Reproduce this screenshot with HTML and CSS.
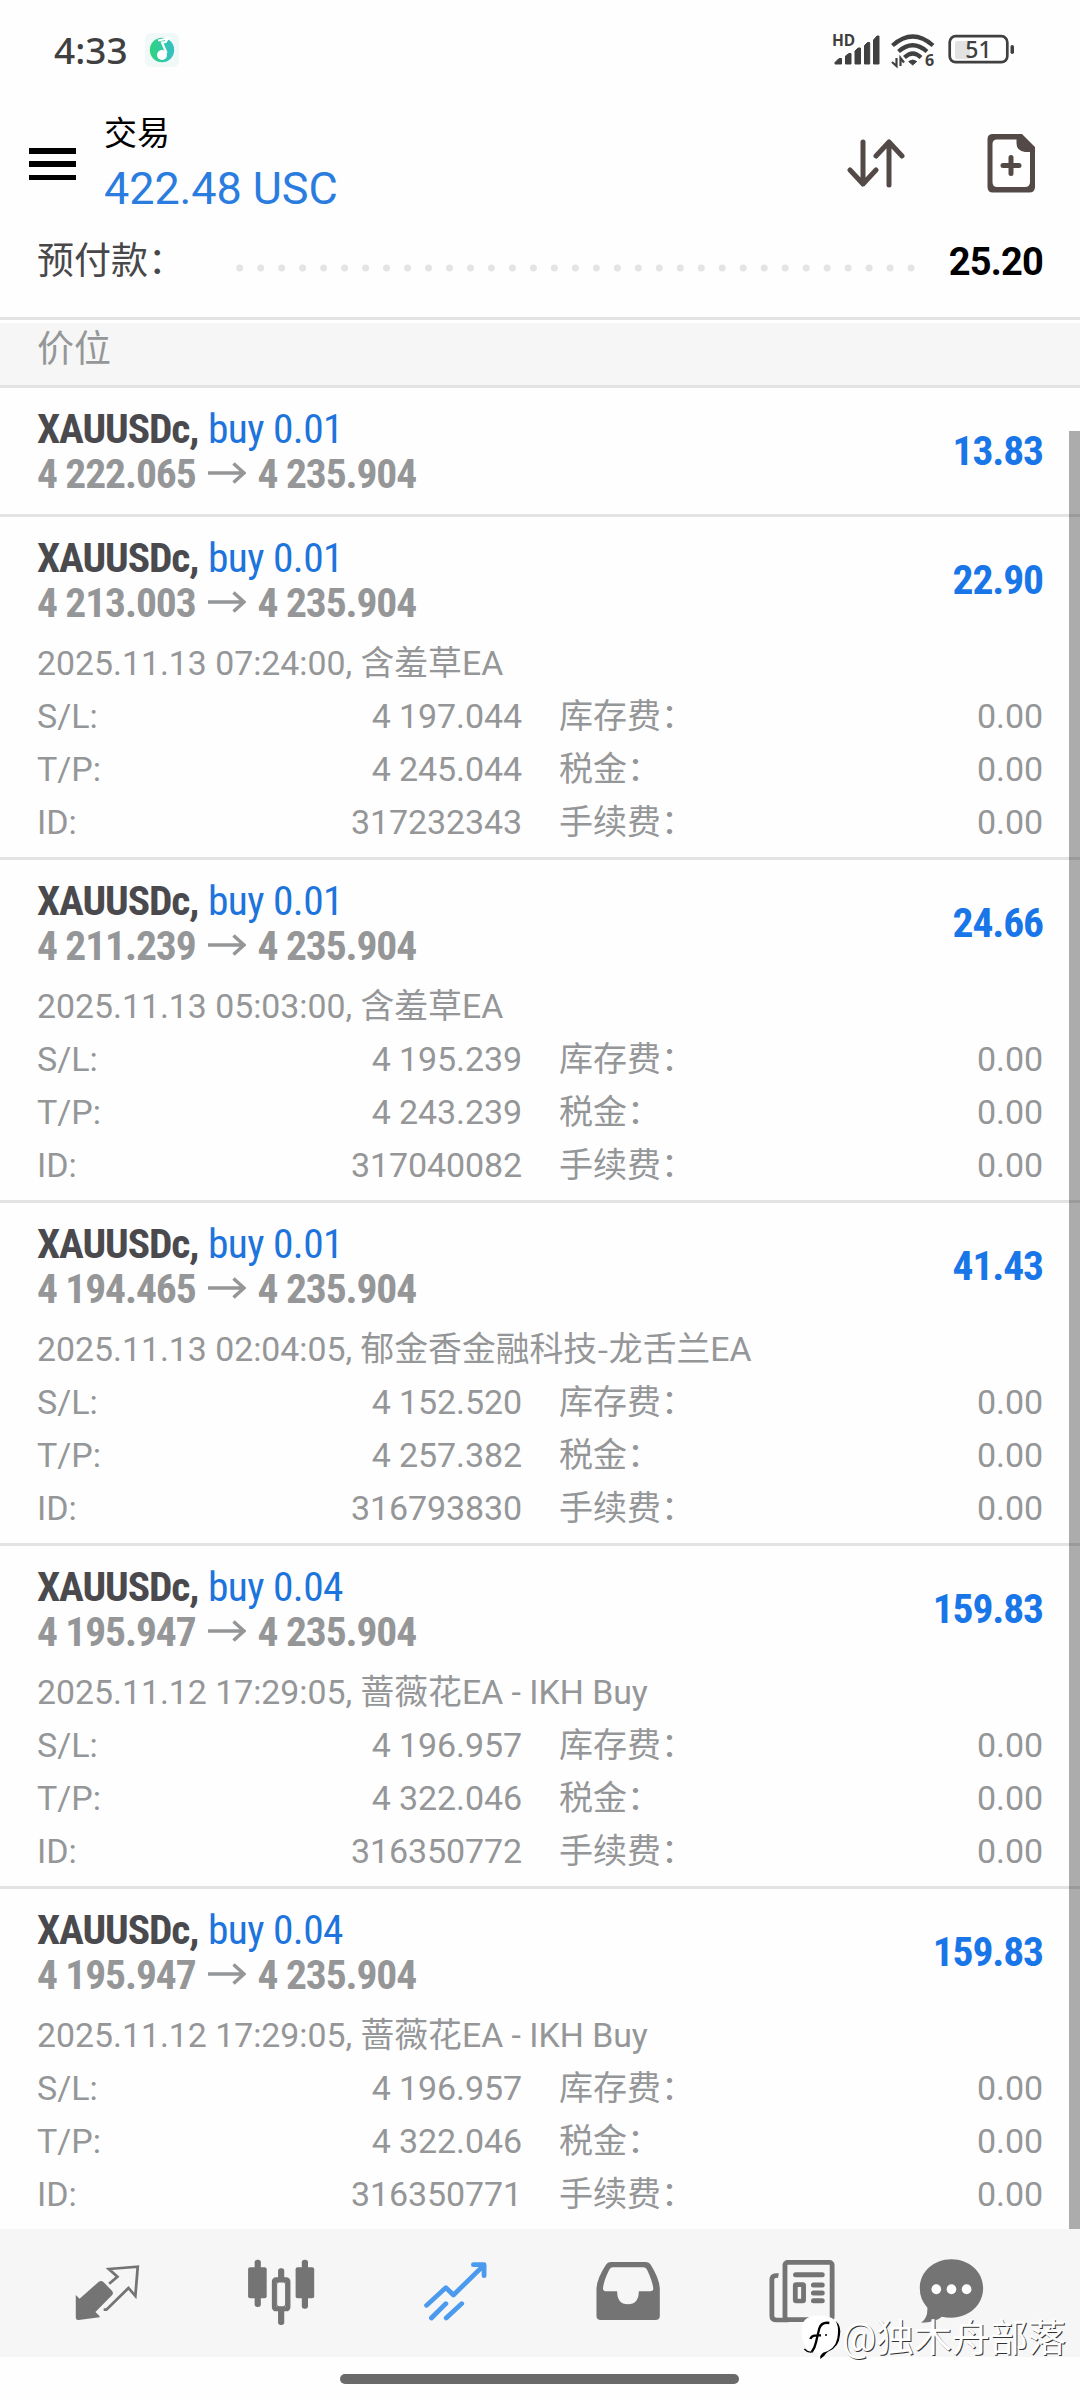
FILE: index.html
```html
<!DOCTYPE html>
<html lang="zh-CN">
<head>
<meta charset="utf-8">
<title>交易</title>
<link rel="stylesheet" href="styles.css">
</head>
<body>
<svg class="defs" width="0" height="0" aria-hidden="true">
  <symbol id="arrow" viewBox="0 0 38 22"><path d="M0 11H36M25.500 1.500L36 11L25.500 20.500" fill="none" stroke="#959698" stroke-width="3.500"/></symbol>
</svg>
<div class="screen">
  <div class="status">
    <span class="time">4:33</span>
    <svg class="music" width="34" height="34" viewBox="0 0 34 34">
      <defs><linearGradient id="g" x1="0" x2="1"><stop offset="0" stop-color="#2fd37f"/><stop offset="1" stop-color="#35bfc6"/></linearGradient></defs>
      <rect width="34" height="34" rx="6" fill="#f0f9f8"/>
      <circle cx="17" cy="17" r="12.200" fill="url(#g)"/>
      <path d="M13 7.500L23 5.500L20.500 9L17 9.500L21.500 20" fill="none" stroke="#fff" stroke-width="2.200"/>
      <circle cx="17" cy="22" r="5" fill="#fff"/>
    </svg>
    <svg class="signals" width="184" height="40" viewBox="832 30 184 40">
      <text x="832" y="46" font-size="15.500" font-weight="700" fill="#404040">HD</text>
      <g fill="#404040">
        <path d="M835 64V62.500L839 58.500H841.500V64ZM845.500 64V56L849 53.500H851V64ZM855 64V51L858 48H860.500V64ZM864.500 64V45.500L867.500 42.500H869.700V64ZM873.500 64V40L877 36H879V64Z" stroke="#404040"/>
        <path d="M908.700 61.500Q912.700 58.500 916.700 61.500L912.700 65Z" stroke="#404040"/>
      </g>
      <g fill="none" stroke="#404040" stroke-width="4.200">
        <path d="M892.500 45.500Q912.700 27.500 933 45.500M898.500 51.500Q912.700 39 927 51.500M904.500 57.500Q912.700 49.500 921 57.500"/>
        <path d="M892 62L896.500 66V58M900.500 66V58L904 62.500" stroke-width="2.200"/>
      </g>
      <text x="925" y="66" font-size="16" font-weight="700" fill="#404040">6</text>
      <rect x="949.700" y="36.200" width="57.600" height="26" rx="6" fill="none" stroke="#404040" stroke-width="2.700"/>
      <path d="M957 41H970V59H957Q955 59 955 57V43Q955 41 957 41Z" fill="#e2e2e2"/>
      <text x="978.500" y="58" text-anchor="middle" font-size="23" font-weight="500" fill="#404040">51</text>
      <rect x="1010.500" y="45" width="3.500" height="9" rx="1.700" fill="#404040"/>
    </svg>
  </div>

  <header class="header">
    <div class="menu"><i></i><i></i><i></i></div>
    <div class="title"><h1>交易</h1><p>422.48 USC</p></div>
    <svg class="sort" width="58" height="50" viewBox="0 0 58 50" fill="none" stroke="#534a47" stroke-width="5" stroke-linecap="round" stroke-linejoin="round"><path d="M16 3V45M3 31L16 45L29 31M42 46V3M29 17L42 3L55 17"/></svg>
    <svg class="new" width="48" height="60" viewBox="0 0 48 60"><path fill="#534a47" fill-rule="evenodd" d="M6 1H35L48 14V54Q48 59.500 42 59.500H6Q0.500 59.500 0.500 54V6Q0.500 1 6 1ZM10 6.500Q5.500 6.500 5.500 11V49Q5.500 54 10 54H38Q43 54 43 49V19H38Q29.500 18 29.500 10V6.500Z"/><path d="M24 24.500V40.500M16 32.500H32" stroke="#534a47" stroke-width="5" stroke-linecap="round"/></svg>
  </header>

  <div class="margin">
    <span class="margin-label">预付款：</span>
    <svg class="dots" width="690" height="8"><path d="M3.700 4H680" stroke="#e4e4e4" stroke-width="7" stroke-linecap="round" stroke-dasharray="0 20.980"/></svg>
    <b>25.20</b>
  </div>
  <div class="section">价位</div>

  <main class="list">
    <article class="trade">
      <div class="head"><div><p class="sym"><b>XAUUSDc,</b><span>buy 0.01</span></p><p class="price"><span>4 222.065</span><svg width="38" height="22"><use href="#arrow"/></svg><span>4 235.904</span></p></div><strong>13.83</strong></div>
    </article>
    <article class="trade">
      <div class="head"><div><p class="sym"><b>XAUUSDc,</b><span>buy 0.01</span></p><p class="price"><span>4 213.003</span><svg width="38" height="22"><use href="#arrow"/></svg><span>4 235.904</span></p></div><strong>22.90</strong></div>
      <p class="note">2025.11.13 07:24:00, <span>含羞草</span>EA</p>
      <div class="grid"><span>S/L:</span><em>4 197.044</em><span class="cn">库存费：</span><em>0.00</em><span>T/P:</span><em>4 245.044</em><span class="cn">税金：</span><em>0.00</em><span>ID:</span><em>317232343</em><span class="cn">手续费：</span><em>0.00</em></div>
    </article>
    <article class="trade">
      <div class="head"><div><p class="sym"><b>XAUUSDc,</b><span>buy 0.01</span></p><p class="price"><span>4 211.239</span><svg width="38" height="22"><use href="#arrow"/></svg><span>4 235.904</span></p></div><strong>24.66</strong></div>
      <p class="note">2025.11.13 05:03:00, <span>含羞草</span>EA</p>
      <div class="grid"><span>S/L:</span><em>4 195.239</em><span class="cn">库存费：</span><em>0.00</em><span>T/P:</span><em>4 243.239</em><span class="cn">税金：</span><em>0.00</em><span>ID:</span><em>317040082</em><span class="cn">手续费：</span><em>0.00</em></div>
    </article>
    <article class="trade">
      <div class="head"><div><p class="sym"><b>XAUUSDc,</b><span>buy 0.01</span></p><p class="price"><span>4 194.465</span><svg width="38" height="22"><use href="#arrow"/></svg><span>4 235.904</span></p></div><strong>41.43</strong></div>
      <p class="note">2025.11.13 02:04:05, <span>郁金香金融科技-龙舌兰</span>EA</p>
      <div class="grid"><span>S/L:</span><em>4 152.520</em><span class="cn">库存费：</span><em>0.00</em><span>T/P:</span><em>4 257.382</em><span class="cn">税金：</span><em>0.00</em><span>ID:</span><em>316793830</em><span class="cn">手续费：</span><em>0.00</em></div>
    </article>
    <article class="trade">
      <div class="head"><div><p class="sym"><b>XAUUSDc,</b><span>buy 0.04</span></p><p class="price"><span>4 195.947</span><svg width="38" height="22"><use href="#arrow"/></svg><span>4 235.904</span></p></div><strong>159.83</strong></div>
      <p class="note">2025.11.12 17:29:05, <span>蔷薇花</span>EA - IKH Buy</p>
      <div class="grid"><span>S/L:</span><em>4 196.957</em><span class="cn">库存费：</span><em>0.00</em><span>T/P:</span><em>4 322.046</em><span class="cn">税金：</span><em>0.00</em><span>ID:</span><em>316350772</em><span class="cn">手续费：</span><em>0.00</em></div>
    </article>
    <article class="trade">
      <div class="head"><div><p class="sym"><b>XAUUSDc,</b><span>buy 0.04</span></p><p class="price"><span>4 195.947</span><svg width="38" height="22"><use href="#arrow"/></svg><span>4 235.904</span></p></div><strong>159.83</strong></div>
      <p class="note">2025.11.12 17:29:05, <span>蔷薇花</span>EA - IKH Buy</p>
      <div class="grid"><span>S/L:</span><em>4 196.957</em><span class="cn">库存费：</span><em>0.00</em><span>T/P:</span><em>4 322.046</em><span class="cn">税金：</span><em>0.00</em><span>ID:</span><em>316350771</em><span class="cn">手续费：</span><em>0.00</em></div>
    </article>
    <div class="scrollbar"></div>
  </main>

  <nav class="tabs">
    <svg viewBox="210 170 210 210" preserveAspectRatio="none"><path fill="#747474" d="M221 287L232 298L287 248Q295 242 302 249L326 274Q332 281 326 288L278 338L290 350V354L229 362Q221 363 221 354Z"/><path d="M318 253L342 232L317 209L401 202L394 290L374 266L310 331H302" fill="none" stroke="#747474" stroke-width="8"/></svg>
    <svg viewBox="708 170 210 210" preserveAspectRatio="none"><g fill="#747474"><rect x="736" y="181" width="18" height="142" rx="8"/><rect x="717" y="204" width="54" height="93" rx="6"/><rect x="873" y="181" width="18" height="147" rx="8"/><rect x="855" y="204" width="54" height="93" rx="6"/><rect x="804" y="207" width="18" height="40" rx="8"/><rect x="804" y="325" width="18" height="52" rx="8"/></g><rect x="793" y="241" width="40" height="88" rx="5" fill="#f6f6f6" stroke="#747474" stroke-width="14"/><rect x="800" y="248" width="26" height="74" rx="7" fill="#f6f6f6" stroke="#747474" stroke-width="3"/></svg>
    <svg viewBox="1210 170 210 210" preserveAspectRatio="none"><path d="M1232 318L1288 265L1310 287L1398 198M1368 196H1399V229M1246 356L1288 313M1289 356L1334 313" fill="none" stroke="#4b9aee" stroke-width="14" stroke-linecap="round" stroke-linejoin="round"/></svg>
    <svg viewBox="148 170 210 210" preserveAspectRatio="none"><path fill="#747474" fill-rule="evenodd" d="M202 188H303Q314 188 319 197Q345 240 345 270V349Q345 362 332 362H174Q161 362 161 349V270Q161 240 188 197Q193 188 202 188ZM209 204Q202 204 198 211Q182 244 180 266Q179 276 190 276H221Q221 315 252 315Q284 315 284 276H317Q327 276 326 266Q323 244 308 211Q304 204 297 204Z"/></svg>
    <svg viewBox="652 170 210 210" preserveAspectRatio="none"><g fill="none" stroke="#747474" stroke-width="14"><rect x="710" y="189" width="137" height="172" rx="8"/><path d="M691 229Q672 226 672 242V350Q672 362 686 362H720"/></g><path d="M741 226H818M793 257H818M793 281H818M793 304H818" stroke="#747474" stroke-width="15" stroke-linecap="round"/><rect x="740" y="256" width="24" height="49" rx="3" fill="none" stroke="#747474" stroke-width="14"/></svg>
    <svg viewBox="1090 170 210 210" preserveAspectRatio="none"><path fill="#747474" d="M1193 180C1245 180 1285 218 1285 267S1245 355 1193 355Q1178 355 1165 352Q1148 369 1105 370Q1125 355 1123 325Q1101 300 1101 267C1101 218 1141 180 1193 180Z"/><g fill="#fff"><ellipse cx="1149" cy="270" rx="14" ry="15"/><ellipse cx="1193" cy="270" rx="14" ry="15"/><ellipse cx="1237" cy="270" rx="14" ry="15"/></g></svg>
  </nav>
  <div class="home"><i></i></div>

  <div class="watermark">
    <svg width="42" height="46" viewBox="64 60 126 138"><path fill="#000" d="M168 78Q185 92 181 120Q178 158 145 170Q138 174 134 182L122 192Q120 182 124 176L150 150Z"/><path fill="#fff" d="M66 115Q62 66 105 62Q160 58 171 84Q178 100 173 130Q166 165 130 173L118 186L115 173Q72 174 66 115Z"/><path d="M149 84Q126 80 119 100Q114 120 109 142Q106 158 96 171M92 132Q96 120 114 121H124" fill="none" stroke="#000" stroke-width="7"/><path d="M96 171Q84 173 74 162" fill="none" stroke="#000" stroke-width="4"/><circle cx="139" cy="120" r="3"/></svg><span>@独木舟部落</span>
  </div>
</div>
</body>
</html>
```
FILE: styles.css
```css
* { box-sizing: border-box; }
body, p, h1 { margin: 0; }
body { background: #fff; font-family: Roboto, "Noto Sans CJK SC", sans-serif; }
em { font-style: normal; }
svg { display: block; flex: none; }
.defs { position: absolute; }
.screen { position: relative; width: 1080px; height: 2400px; overflow: hidden; display: flex; flex-direction: column; background: #fefefe; }

.status { height: 100px; display: flex; align-items: center; padding: 0 64px 0 54px; }
.time { width: 91px; font: 500 37px/40px "Noto Sans", sans-serif; color: #404040; }
.signals { margin-left: auto; }
.signals text { font-family: "Noto Sans", sans-serif; }

.header { height: 125px; display: flex; padding-left: 29px; }
.menu { width: 47px; height: 32px; margin-top: 48px; display: flex; flex-direction: column; justify-content: space-between; }
.menu i { height: 5.500px; background: #000; }
.title { width: 741px; padding: 12px 0 0 28px; }
.title h1 { font-size: 33px; line-height: 44px; font-weight: 400; }
.title p { font-size: 45px; line-height: 64px; color: #2a7ddf; margin-top: 1px; letter-spacing: -0.1px; }
.sort { margin: 39px 0 0 30px; }
.new { margin: 33px 0 0 82px; }

.margin { height: 95px; display: flex; padding: 11px 37px 0 37px; border-bottom: 3px solid #e3e3e3; }
.margin-label { width: 199px; font-size: 37px; line-height: 52px; color: #48484a; }
.dots { margin-top: 28px; }
.margin b { margin-left: auto; font-size: 38px; line-height: 52px; letter-spacing: -0.8px; }
.section { height: 68px; padding-left: 37px; border-top: 3px solid #fff; border-bottom: 3px solid #e3e3e3; background: #f6f6f6; font-size: 37px; line-height: 54px; color: #959698; }

.list { position: relative; height: 1841px; overflow: hidden; }
.trade { height: 343px; border-bottom: 3px solid #e3e3e3; padding: 17px 37px 0 37px; }
.trade:first-child { height: 129px; }
.head { height: 91px; display: flex; justify-content: space-between; align-items: center; font-family: "Roboto Condensed", sans-serif; font-size: 41.500px; letter-spacing: -1.1px; }
.sym, .price { display: flex; align-items: center; height: 45px; line-height: 45px; }
.sym b { width: 171px; color: #4a4a4e; }
.sym span { color: #1d74dc; letter-spacing: -0.6px; }
.price { gap: 12px; font-weight: 700; color: #959698; }
.head strong { color: #1976e8; }
.note { height: 59px; line-height: 59px; margin-top: 9px; font-size: 33.800px; color: #959698; white-space: pre; }
.note span { font-family: "Noto Sans CJK SC", sans-serif; line-height: 1; }
.grid { display: grid; grid-template-columns: 120px 365px 200px 1fr; grid-auto-rows: 53px; margin-top: -3px; font-size: 34px; line-height: 53px; color: #959698; }
.grid em { text-align: right; letter-spacing: -0.1px; }
.grid .cn { margin-left: 37px; }
.scrollbar { position: absolute; right: 0; top: 43px; bottom: 0; width: 11px; background: rgba(0,0,0,.32); }

.tabs { height: 128px; background: #f6f6f6; display: flex; padding: 27px 0 0 72px; gap: 101px; }
.tabs svg { width: 72.300px; height: 70px; }
.tabs svg:last-child { margin-left: -22px; }
.home { padding-top: 17px; }
.home i { display: block; width: 399px; height: 10px; margin: 0 0 0 340px; border-radius: 5px; background: #6a6a6a; }
.watermark { position: absolute; left: 801px; top: 2314px; display: flex; align-items: center; font-size: 38px; line-height: 48px; color: #fff; text-shadow: 1px 1px 0 #333; white-space: nowrap; }
.watermark span { margin-left: -1px; }
```
